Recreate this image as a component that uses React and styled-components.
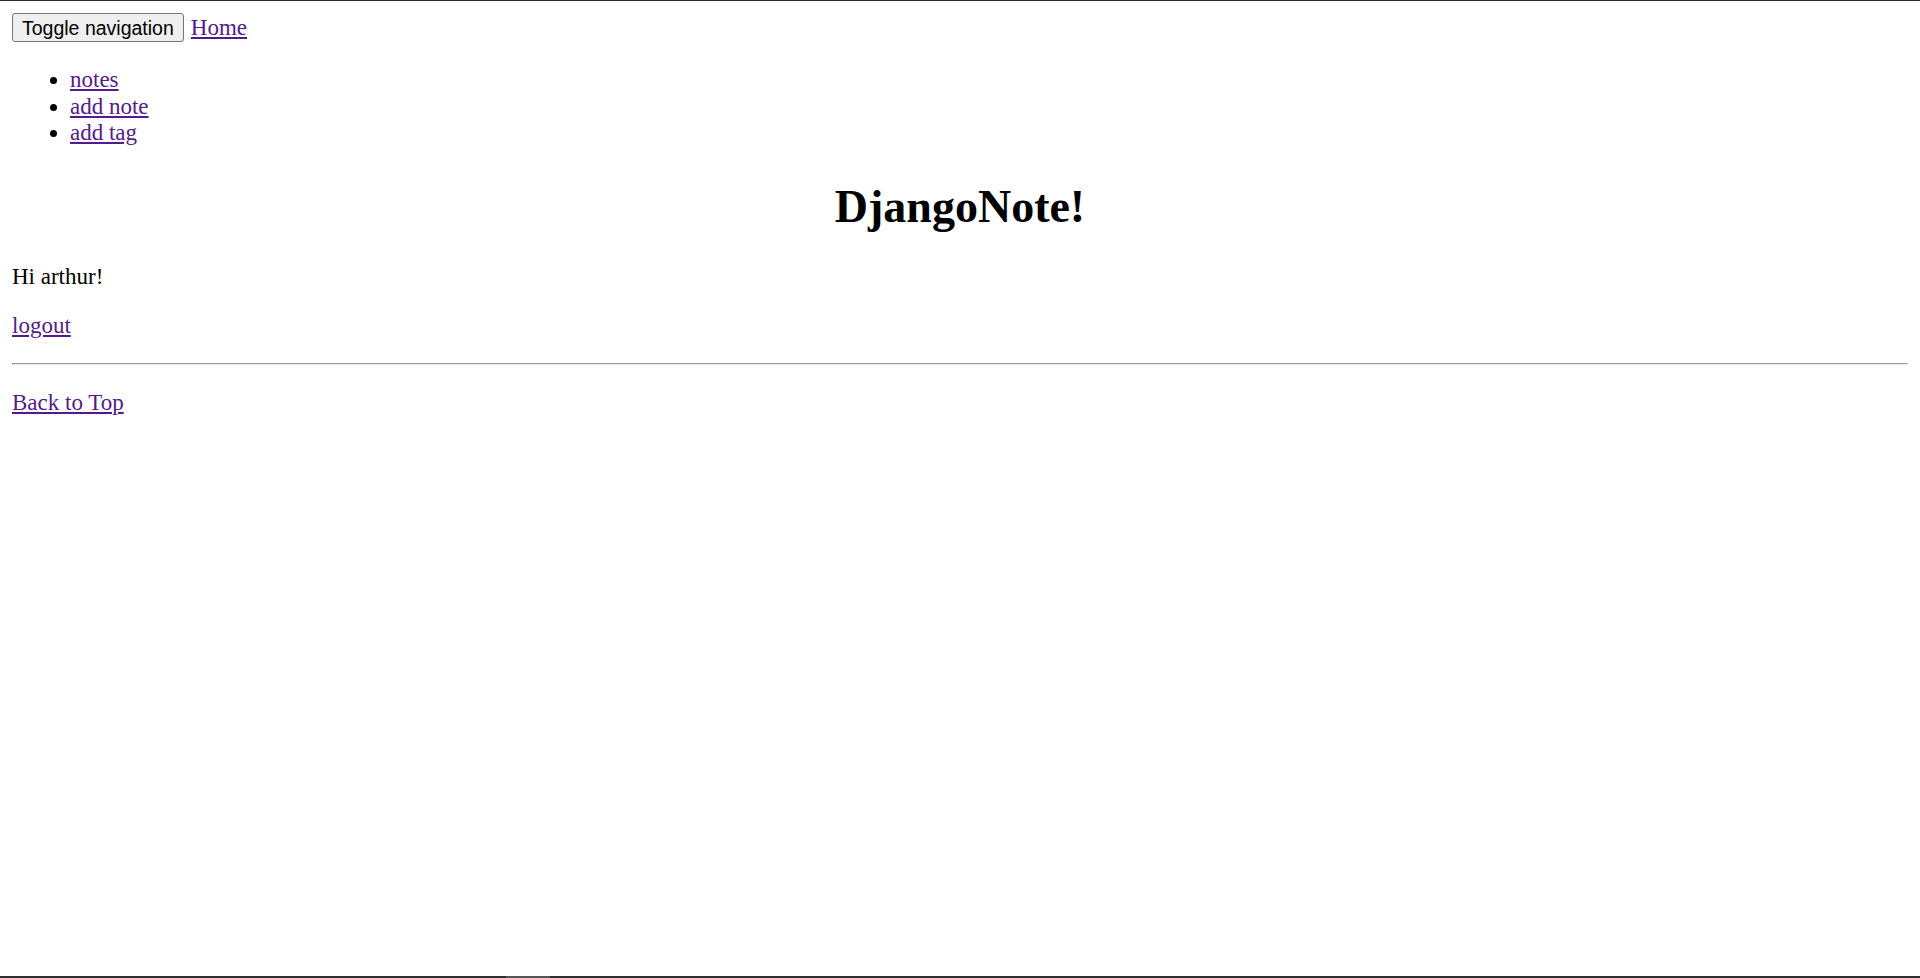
import styled, { createGlobalStyle } from "styled-components";

const GlobalStyle = createGlobalStyle`
  html, body {
    margin: 0;
    padding: 0;
    background: #fff;
  }
  body {
    font-family: "Liberation Serif", "Times New Roman", serif;
    font-size: 23px;
    line-height: 26.67px;
    color: #000;
  }
`;

const Page = styled.div`
  display: flex;
  flex-direction: column;
  min-height: 100vh;
  box-sizing: border-box;
  border-top: 1px solid #2b2b2b;
`;

const Content = styled.div`
  flex: 1;
  padding: 11px 12px 12px;
`;

const ScreenEdge = styled.div`
  height: 2px;
  background: linear-gradient(
    to right,
    #2f2f2f 0,
    #2f2f2f 506px,
    #555 506px,
    #555 550px,
    #2f2f2f 550px
  );
`;

const Nav = styled.nav``;

const NavBar = styled.div`
  display: flex;
  align-items: baseline;
  gap: 7px;
  padding-top: 1px;
  height: 31px;
`;

const ToggleButton = styled.button`
  font-family: "Liberation Sans", Arial, sans-serif;
  font-size: 19.5px;
  line-height: 24px;
  padding: 1.5px 9px;
  margin: 0;
  border: 1.5px solid #767676;
  border-radius: 3px;
  background: #efefef;
  color: #000;
`;

const Link = styled.a`
  color: #551a8b;
  text-decoration: underline;
  cursor: pointer;
`;

const NavList = styled.ul`
  margin: 23px 0;
  padding-left: 58px;
  list-style: disc;
`;

const Title = styled.h1`
  text-align: center;
  font-size: 46px;
  line-height: 53px;
  font-weight: bold;
  margin: 32.5px 0 31px;
`;

const Text = styled.p`
  margin: 23px 0;
`;

const Rule = styled.hr`
  margin: 11.5px 0 25px;
  height: 0;
  border-style: solid;
  border-width: 1.5px;
  border-color: #9a9a9a #eeeeee #eeeeee #9a9a9a;
`;

export default function App() {
  return (
    <>
      <GlobalStyle />
      <Page>
        <Content>
          <Nav>
            <NavBar>
              <ToggleButton type="button">Toggle navigation</ToggleButton>
              <Link href="#">Home</Link>
            </NavBar>
            <NavList>
              <li>
                <Link href="#">notes</Link>
              </li>
              <li>
                <Link href="#">add note</Link>
              </li>
              <li>
                <Link href="#">add tag</Link>
              </li>
            </NavList>
          </Nav>
          <Title>DjangoNote!</Title>
          <Text>Hi arthur!</Text>
          <Text>
            <Link href="#">logout</Link>
          </Text>
          <Rule />
          <Text>
            <Link href="#">Back to Top</Link>
          </Text>
        </Content>
        <ScreenEdge />
      </Page>
    </>
  );
}
